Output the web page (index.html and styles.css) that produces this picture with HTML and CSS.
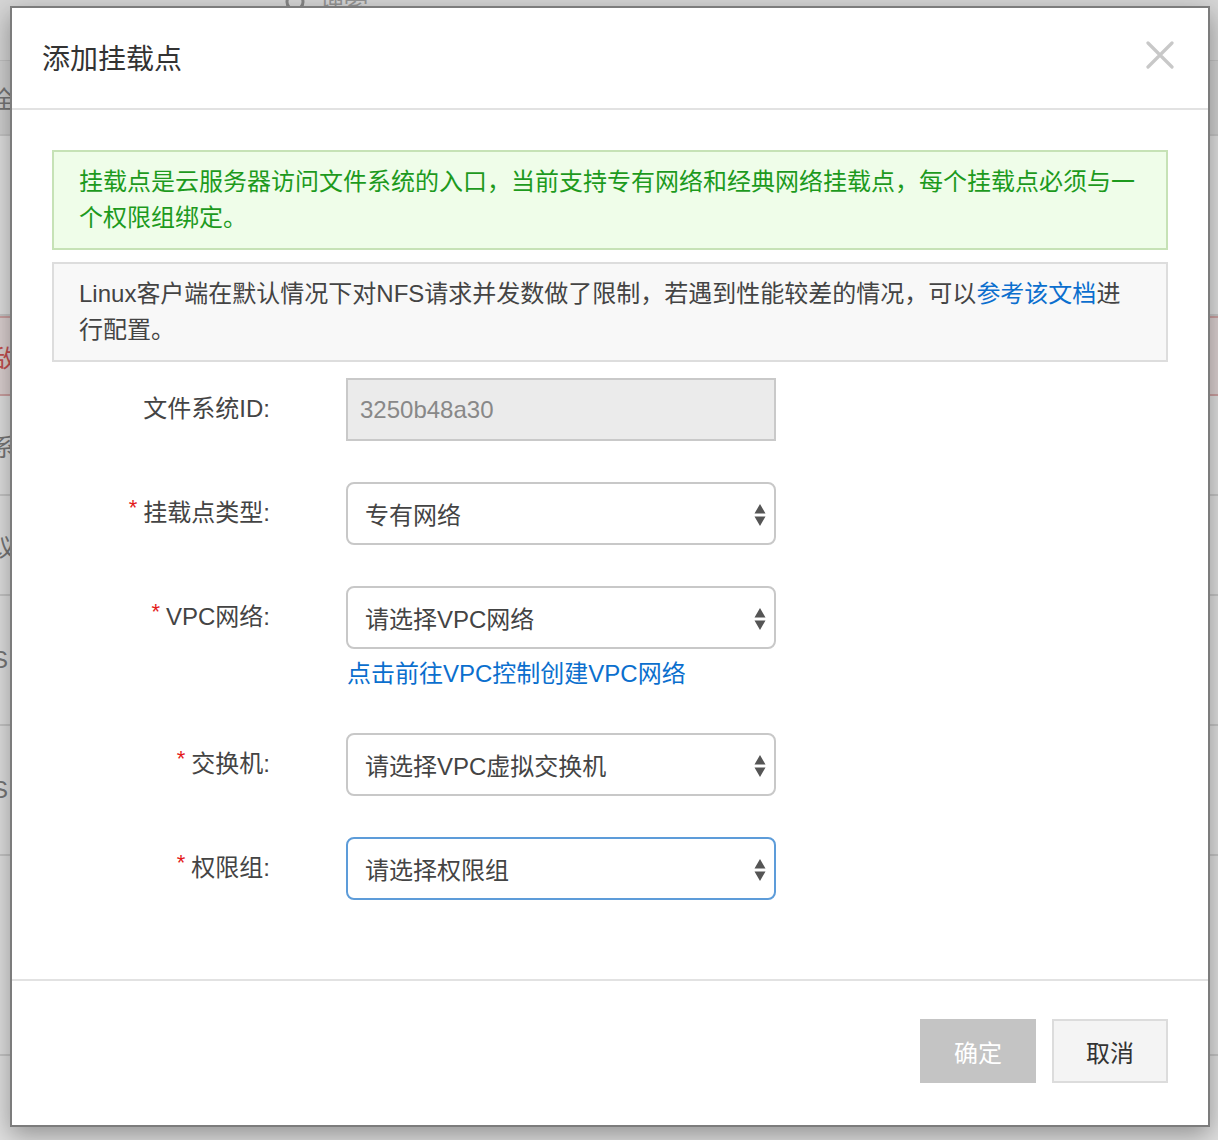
FILE: index.html
```html
<!DOCTYPE html>
<html lang="zh-CN">
<head>
<meta charset="utf-8">
<title>添加挂载点</title>
<link rel="stylesheet" href="styles.css">
</head>
<body>
<div class="page">
  <div class="topbar">
    <div class="search">
      <svg class="search-icon" width="26" height="26" viewBox="0 0 26 26"><circle cx="11" cy="11" r="8" fill="none" stroke="#999" stroke-width="3"/><path d="M17 17l7 7" stroke="#999" stroke-width="3"/></svg>
      <span>搜索</span>
    </div>
  </div>
  <div class="table">
    <div class="trow h1"><span>全</span></div>
    <div class="trow h2"><span></span></div>
    <div class="trow h3 red"><span>敌</span></div>
    <div class="trow h4"><span>系</span></div>
    <div class="trow h5"><span>议</span></div>
    <div class="trow h6"><span>S</span></div>
    <div class="trow h6"><span>S</span></div>
    <div class="trow h7"><span></span></div>
  </div>
</div>
<div class="overlay">
  <div class="dialog">
    <div class="dialog-header">
      <h2 class="dialog-title">添加挂载点</h2>
      <svg class="close" width="28" height="28" viewBox="0 0 28 28"><path d="M2 2L26 26M26 2L2 26" stroke="#c8c8c8" stroke-width="3.2" stroke-linecap="round"/></svg>
    </div>
    <div class="dialog-body">
      <div class="alert alert-success">挂载点是云服务器访问文件系统的入口，当前支持专有网络和经典网络挂载点，每个挂载点必须与一个权限组绑定。</div>
      <div class="alert alert-info">Linux客户端在默认情况下对NFS请求并发数做了限制，若遇到性能较差的情况，可以<a class="link">参考该文档</a>进行配置。</div>
      <div class="form">
        <div class="form-row">
          <div class="label">文件系统ID:</div>
          <div class="control">
            <div class="input disabled">3250b48a30</div>
          </div>
        </div>
        <div class="form-row">
          <div class="label"><span class="req">*</span>挂载点类型:</div>
          <div class="control">
            <div class="select"><span>专有网络</span><svg class="arrows" width="12" height="24" viewBox="0 0 12 24"><path d="M6 1L11.5 10.5H0.5Z M0.5 13.5H11.5L6 23Z" fill="#555"/></svg></div>
          </div>
        </div>
        <div class="form-row">
          <div class="label"><span class="req">*</span>VPC网络:</div>
          <div class="control">
            <div class="select"><span>请选择VPC网络</span><svg class="arrows" width="12" height="24" viewBox="0 0 12 24"><path d="M6 1L11.5 10.5H0.5Z M0.5 13.5H11.5L6 23Z" fill="#555"/></svg></div>
            <a class="link help">点击前往VPC控制创建VPC网络</a>
          </div>
        </div>
        <div class="form-row">
          <div class="label"><span class="req">*</span>交换机:</div>
          <div class="control">
            <div class="select"><span>请选择VPC虚拟交换机</span><svg class="arrows" width="12" height="24" viewBox="0 0 12 24"><path d="M6 1L11.5 10.5H0.5Z M0.5 13.5H11.5L6 23Z" fill="#555"/></svg></div>
          </div>
        </div>
        <div class="form-row">
          <div class="label"><span class="req">*</span>权限组:</div>
          <div class="control">
            <div class="select focused"><span>请选择权限组</span><svg class="arrows" width="12" height="24" viewBox="0 0 12 24"><path d="M6 1L11.5 10.5H0.5Z M0.5 13.5H11.5L6 23Z" fill="#555"/></svg></div>
          </div>
        </div>
      </div>
    </div>
    <div class="dialog-footer">
      <button class="btn btn-primary" disabled>确定</button>
      <button class="btn btn-default">取消</button>
    </div>
  </div>
</div>
</body>
</html>
```
FILE: styles.css
```css
* { box-sizing: border-box; }
html, body { margin: 0; padding: 0; }
body {
  width: 1218px;
  height: 1140px;
  overflow: hidden;
  font-family: "Liberation Sans", "Noto Sans CJK SC", sans-serif;
  background: #ffffff;
  position: relative;
}

/* background page */
.page { width: 1218px; height: 1140px; background: #fff; }
.topbar { height: 75px; background: #f4f4f4; border-bottom: 1px solid #ddd; position: relative; }
.search { display: flex; align-items: center; gap: 10px; padding-left: 284px; margin-top: -14px; color: #aaa; font-size: 24px; }
.table { display: flex; flex-direction: column; }
.trow { border-bottom: 2px solid #e2e2e2; display: flex; align-items: center; font-size: 24px; color: #888; }
.trow span { margin-left: -8px; }
.h1 { height: 75px; background: #eee; }
.h2 { height: 180px; }
.h3 { height: 80px; background: #fbeeee; border-bottom-color: #e8b8b8; border-top: 2px solid #e8b8b8; }
.h3 span { color: #e05a5a; }
.h4 { height: 100px; }
.h5 { height: 100px; }
.h6 { height: 130px; }
.h7 { height: 200px; }

.overlay {
  position: absolute;
  inset: 0;
  background: rgba(0, 0, 0, 0.12);
}

/* dialog */
.dialog {
  position: absolute;
  left: 10px;
  top: 6px;
  width: 1200px;
  background: #fff;
  border: 2px solid #7c7c7c;
  box-shadow: 0 8px 24px rgba(0, 0, 0, 0.35);
  color: #444;
}
.dialog-header {
  height: 102px;
  border-bottom: 2px solid #e2e2e2;
  display: flex;
  align-items: center;
  justify-content: space-between;
  padding: 0 34px 0 30px;
}
.dialog-title {
  margin: 0;
  font-size: 28px;
  font-weight: normal;
  color: #333;
  line-height: 1;
  font-family: "Noto Sans CJK SC", sans-serif;
  margin-top: -2px;
}
.close { display: block; margin-top: -6px; }

.dialog-body { padding: 40px 40px 79px 40px; }

.alert {
  border: 2px solid;
  font-size: 24px;
  line-height: 36px;
  padding: 12px 25px;
  min-height: 100px;
}
.alert-success {
  background: #effde9;
  border-color: #c6e2b6;
  color: #1d9a1d;
}
.alert-info {
  margin-top: 12px;
  background: #f8f8f8;
  border-color: #dddddd;
  color: #444;
}
.link { color: #0b6fce; text-decoration: none; }

.form {
  margin-top: 16px;
  display: flex;
  flex-direction: column;
  gap: 41px;
}
.form-row { display: flex; align-items: flex-start; }
.label {
  width: 218px;
  height: 63px;
  display: flex;
  align-items: center;
  justify-content: flex-end;
  font-size: 24px;
  color: #444;
  padding-bottom: 6px;
}
.req { color: #e41b1b; font-size: 22px; margin-right: 6px; position: relative; top: -3px; }
.control { margin-left: 76px; width: 430px; display: flex; flex-direction: column; }
.input {
  height: 63px;
  border: 2px solid #c9c9c9;
  font-size: 24px;
  display: flex;
  align-items: center;
  padding-left: 12px;
}
.input.disabled { background: #ebebeb; color: #888; }
.select {
  height: 63px;
  border: 2px solid #c8c8c8;
  border-radius: 8px;
  font-size: 24px;
  color: #444;
  display: flex;
  align-items: center;
  justify-content: space-between;
  padding: 0 8px 0 17px;
  background: #fff;
}
.select.focused { border-color: #5d9cd9; }
.arrows { display: block; margin-top: 2px; }
.help { font-size: 24px; line-height: 36px; padding-top: 7px; margin-left: 1px; }

.dialog-footer {
  border-top: 2px solid #e2e2e2;
  padding: 38px 40px 42px;
  display: flex;
  justify-content: flex-end;
  gap: 16px;
}
.btn {
  width: 116px;
  height: 64px;
  font-size: 24px;
  font-family: "Liberation Sans", "Noto Sans CJK SC", sans-serif;
  border: 2px solid transparent;
  padding: 0;
}
.btn-primary { background: #c4c4c4; color: #fff; border-color: #c4c4c4; }
.btn-default { background: #f4f4f4; color: #333; border-color: #dcdcdc; }
```
